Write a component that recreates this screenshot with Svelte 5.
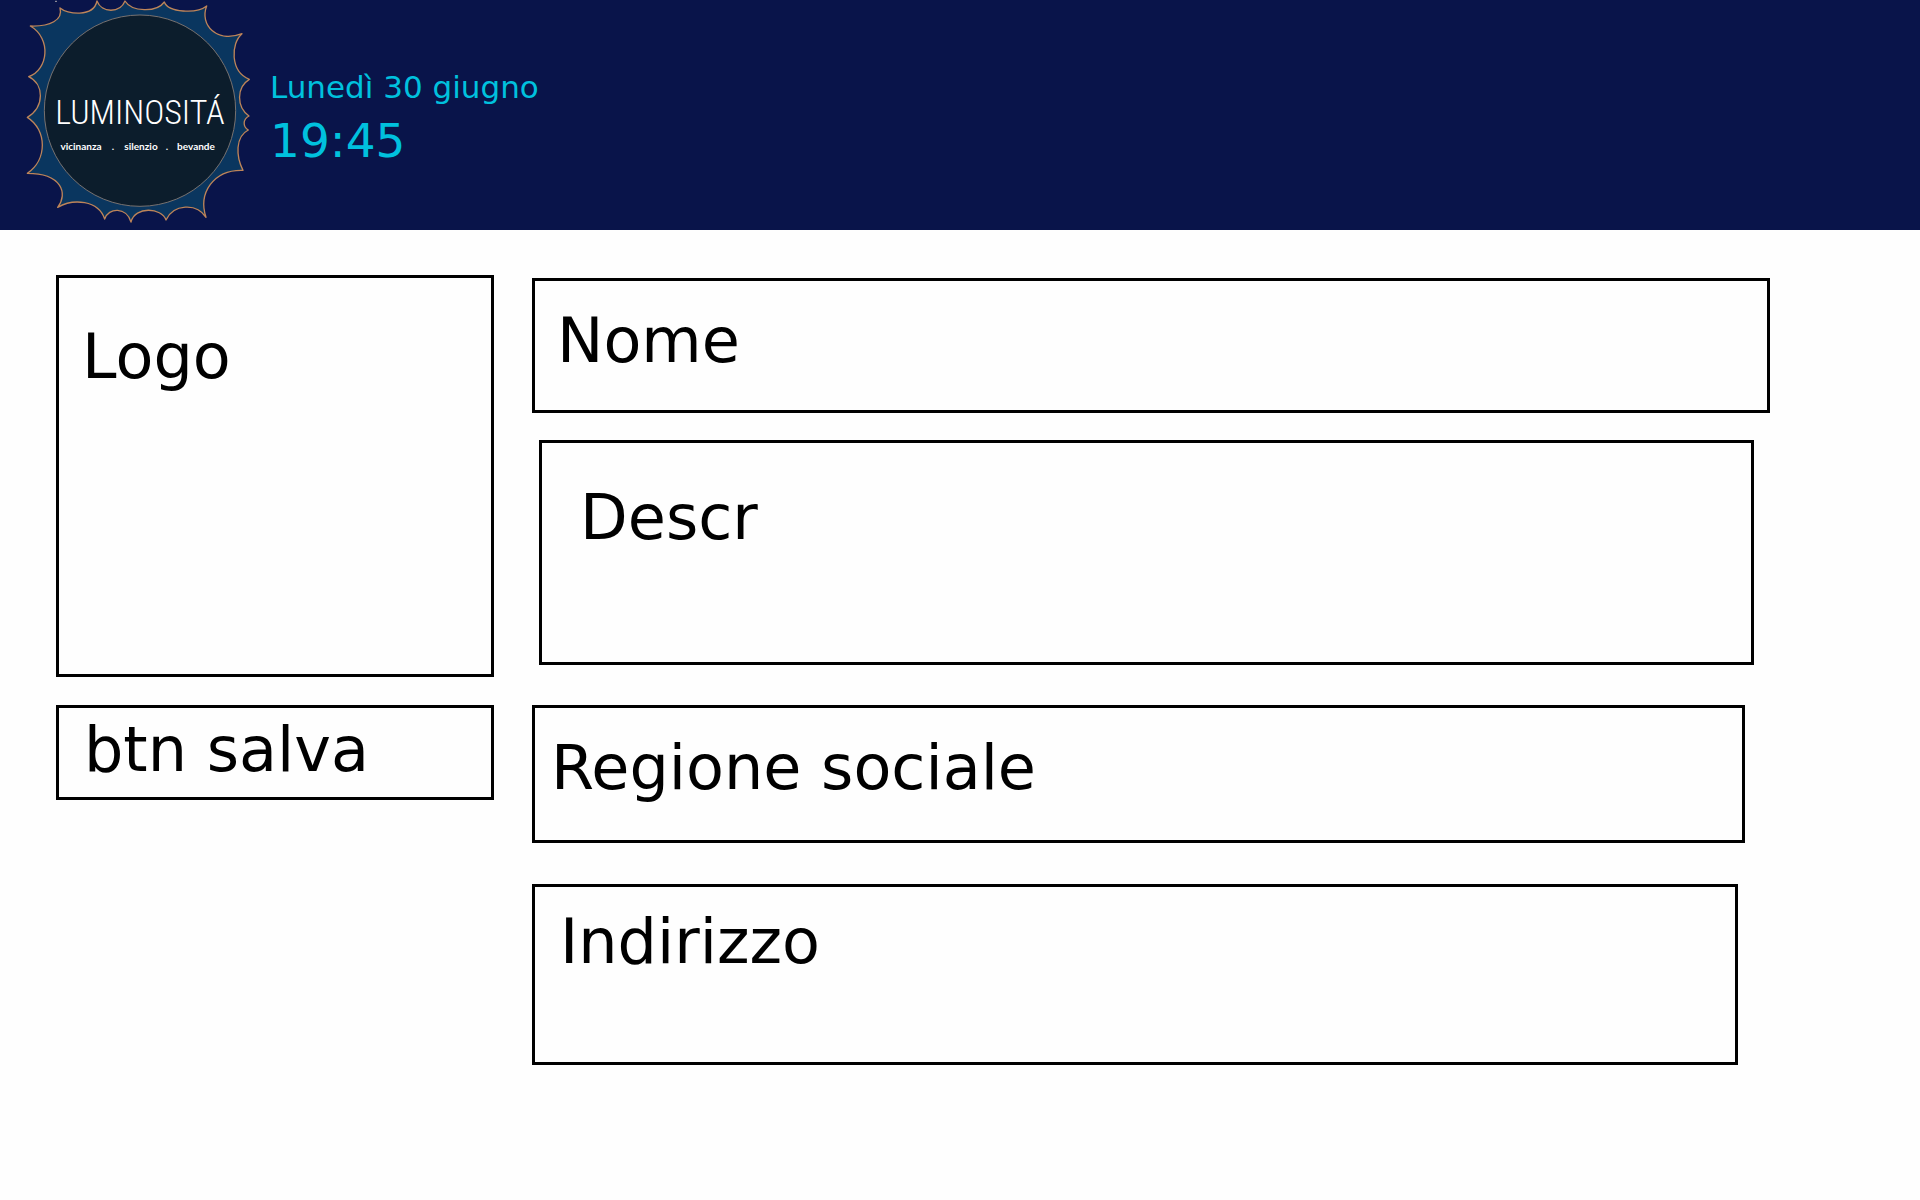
<script>
  const fields = [
    { id: 'nome', label: 'Nome' },
    { id: 'descr', label: 'Descr', multiline: true },
    { id: 'regione', label: 'Regione sociale' },
    { id: 'indirizzo', label: 'Indirizzo' }
  ];
</script>

<header>
  <svg class="brand" viewBox="0 0 270 230" role="img" aria-label="Luminositá">
    <g transform="scale(0.33333)">
      <path
        class="sun"
        d="M180 24C200 42 280 54 291 3C305 40 360 40 375 3C395 36 470 38 493 6C505 38 590 42 620 18C598 75 650 130 726 101C692 130 690 215 748 238C709 262 709 320 747 348C728 358 728 380 745 390C705 410 708 470 729 511C640 508 594 580 618 652C590 608 520 612 498 660C485 622 405 618 393 666C380 620 325 622 314 657C295 600 220 595 173 622C205 580 185 520 82 520C142 480 142 390 82 352C135 320 132 252 86 230C145 210 155 115 91 78C150 80 190 60 180 24Z"
      />
      <circle class="disc" cx="420" cy="332" r="287" />
      <path class="speck" d="M165 4h6" />
    </g>
    <text class="wordmark" x="140" y="124" text-anchor="middle">LUMINOSITÁ</text>
    <g class="tagline" text-anchor="middle">
      <text x="81" y="150">vicinanza</text>
      <text x="113" y="150">.</text>
      <text x="141" y="150">silenzio</text>
      <text x="167" y="150">.</text>
      <text x="196" y="150">bevande</text>
    </g>
  </svg>
  <div class="clock">
    <span class="date">Lunedì 30 giugno</span>
    <time datetime="19:45">19:45</time>
  </div>
</header>

<main>
  <div class="side">
    <section class="box logo"><h2>Logo</h2></section>
    <button class="box save" type="submit" form="details">btn salva</button>
  </div>
  <form id="details">
    {#each fields as field}
      <div class="box field {field.id}">
        <label for={field.id}>{field.label}</label>
        {#if field.multiline}
          <textarea id={field.id} rows="1"></textarea>
        {:else}
          <input id={field.id} type="text" />
        {/if}
      </div>
    {/each}
  </form>
</main>

<style>
  :global(body) {
    margin: 0;
    background: #fefefe;
    color: #000;
    font-family: Verdana, 'DejaVu Sans', sans-serif;
  }

  header {
    display: flex;
    background: #09144a;
    color: #00c1de;
  }

  .brand {
    display: block;
    flex: none;
    width: 270px;
    height: 230px;
  }

  .sun {
    fill: #0a365f;
    stroke: #bd8459;
    stroke-width: 4;
    stroke-linejoin: round;
  }

  .disc {
    fill: #0c1d2c;
    stroke: #77716f;
    stroke-width: 3;
  }

  .speck {
    stroke: #a9a4a8;
    stroke-width: 3;
  }

  .wordmark {
    fill: #fff;
    font-family: 'Liberation Sans Narrow', 'Roboto Condensed', 'Liberation Serif', serif;
    font-size: 34px;
    font-weight: 300;
  }

  .tagline {
    fill: #fff;
    font-family: Lato, sans-serif;
    font-size: 10px;
    font-weight: 700;
  }

  .clock {
    display: flex;
    flex-direction: column;
    gap: 6px;
    padding-top: 67px;
  }

  .date {
    font-size: 31px;
    line-height: 40px;
  }

  time {
    font-size: 47px;
    line-height: 56px;
  }

  main {
    display: grid;
    grid-template-columns: 438px 1fr;
    gap: 38px;
    padding: 45px 150px 45px 56px;
  }

  .side,
  form {
    display: flex;
    flex-direction: column;
  }

  .side {
    gap: 28px;
  }

  form {
    padding-top: 3px;
  }

  .box {
    box-sizing: border-box;
    border: 3px solid #000;
    font-size: 62px;
    line-height: 72px;
  }

  .logo {
    min-height: 402px;
    padding: 43px 23px;
  }

  h2 {
    margin: 0;
    font: inherit;
  }

  .save {
    min-height: 95px;
    padding: 6px 25px 11px;
    background: transparent;
    color: inherit;
    font-family: inherit;
    text-align: left;
    cursor: pointer;
  }

  .field {
    display: flex;
    align-items: flex-start;
    gap: 24px;
  }

  .nome {
    min-height: 135px;
    padding: 24px 22px;
  }

  .descr {
    min-height: 225px;
    margin: 27px 16px 40px 7px;
    padding: 39px 38px;
  }

  .regione {
    min-height: 138px;
    margin-right: 25px;
    padding: 24px 16px;
  }

  .indirizzo {
    min-height: 181px;
    margin: 41px 32px 0 0;
    padding: 19px 25px;
  }

  input,
  textarea {
    flex: 1;
    min-width: 0;
    height: 72px;
    padding: 0;
    border: 0;
    outline: 0;
    background: transparent;
    font: inherit;
    resize: none;
  }

  textarea {
    align-self: stretch;
    height: auto;
  }
</style>
